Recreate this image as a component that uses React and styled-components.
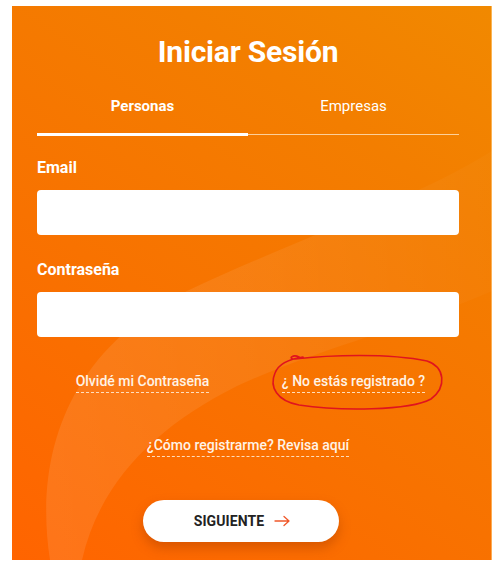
import React from "react";
import styled, { createGlobalStyle } from "styled-components";

const GlobalStyle = createGlobalStyle`
  html, body {
    margin: 0;
    padding: 0;
    background: #ffffff;
  }
  body {
    font-family: Roboto, "Liberation Sans", sans-serif;
  }
  * { box-sizing: border-box; }
`;

const Page = styled.div`
  padding: 6px 8px 7px 12px;
`;

const Panel = styled.div`
  position: relative;
  overflow: hidden;
  width: 480px;
  height: 554px;
  background: linear-gradient(35deg, #ff6400 0%, #f87200 40%, #f37e00 75%, #f18900 100%);
  box-shadow: inset -1px 0 0 rgba(255, 210, 140, 0.6);
  padding: 28px 33px 0 25px;
  display: flex;
  flex-direction: column;
`;

const Waves = styled.svg`
  position: absolute;
  inset: 0;
  pointer-events: none;
`;

const Content = styled.div`
  position: relative;
  display: flex;
  flex-direction: column;
`;

const Title = styled.h1`
  margin: 0;
  text-align: center;
  color: #fff;
  font-size: 30px;
  line-height: 36px;
  font-weight: 700;
  letter-spacing: -0.2px;
`;

const Tabs = styled.div`
  margin-top: 26px;
  display: grid;
  grid-template-columns: 1fr 1fr;
  border-bottom: 1px solid rgba(255, 235, 205, 0.75);
`;

const Tab = styled.div`
  text-align: center;
  color: #fff;
  font-size: 15px;
  line-height: 20px;
  font-weight: ${(p) => (p.$active ? 700 : 400)};
  padding-bottom: 17px;
  border-bottom: 3px solid ${(p) => (p.$active ? "#ffffff" : "transparent")};
  margin-bottom: -2px;
`;

const Label = styled.label`
  display: block;
  color: #fff;
  font-size: 16px;
  line-height: 20px;
  font-weight: 700;
  margin-top: ${(p) => p.$top}px;
`;

const Input = styled.input`
  display: block;
  width: 100%;
  height: 45px;
  margin-top: 12px;
  border: none;
  border-radius: 4px;
  background: #fff;
  outline: none;
  padding: 0 12px;
  font-size: 15px;
`;

const LinkRow = styled.div`
  margin-top: 34px;
  display: grid;
  grid-template-columns: 1fr 1fr;
  justify-items: center;
`;

const LinkCell = styled.div`
  position: relative;
  display: flex;
  justify-content: center;
`;

const TextLink = styled.a`
  color: #fff3e6;
  font-size: 14px;
  line-height: 20px;
  font-weight: 500;
  text-decoration: none;
  padding-bottom: 1px;
  border-bottom: 1px dashed rgba(255, 240, 220, 0.85);
`;

const HowRow = styled.div`
  margin-top: 42px;
  display: flex;
  justify-content: center;
`;

const Scribble = styled.svg`
  position: absolute;
  left: -13px;
  top: -18px;
  width: 176px;
  height: 58px;
  overflow: visible;
  pointer-events: none;
`;

const ButtonRow = styled.div`
  margin-top: 43px;
  display: flex;
  justify-content: center;
  padding-right: 15px;
`;

const NextButton = styled.button`
  width: 196px;
  height: 42px;
  border: none;
  border-radius: 21px;
  background: #fff;
  box-shadow: 0 6px 12px rgba(150, 50, 0, 0.35);
  display: flex;
  align-items: center;
  justify-content: center;
  gap: 10px;
  padding: 0 0 0 4px;
  font-family: Roboto, "Liberation Sans", sans-serif;
  font-size: 14px;
  font-weight: 700;
  color: #222;
  letter-spacing: 0.1px;
  cursor: pointer;
`;

const Arrow = () => (
  <svg width="17" height="12" viewBox="0 0 17 12" fill="none">
    <path d="M1 6h14M10 1.5L15 6l-5 4.5" stroke="#f0582a" strokeWidth="1.3" strokeLinecap="round" strokeLinejoin="round" />
  </svg>
);

export default function App() {
  return (
    <>
      <GlobalStyle />
      <Page>
        <Panel>
          <Waves viewBox="0 0 480 554" preserveAspectRatio="none">
            <defs>
              <linearGradient id="band" x1="0" y1="0" x2="1" y2="0">
                <stop offset="0" stopColor="#fff" stopOpacity="0.1" />
                <stop offset="0.45" stopColor="#fff" stopOpacity="0.07" />
                <stop offset="1" stopColor="#fff" stopOpacity="0.02" />
              </linearGradient>
            </defs>
            <path
              d="M38 554 C 22 450, 55 345, 175 285 C 280 235, 400 195, 480 145 L 480 285 C 400 320, 300 345, 225 380 C 145 420, 88 475, 70 554 Z"
              fill="url(#band)"
            />
          </Waves>
          <Content>
            <Title>Iniciar Sesión</Title>
            <Tabs>
              <Tab $active>Personas</Tab>
              <Tab>Empresas</Tab>
            </Tabs>
            <Label $top={23}>Email</Label>
            <Input type="email" />
            <Label $top={25}>Contraseña</Label>
            <Input type="password" />
            <LinkRow>
              <LinkCell>
                <TextLink href="#">Olvidé mi Contraseña</TextLink>
              </LinkCell>
              <LinkCell>
                <TextLink href="#">¿ No estás registrado ?</TextLink>
                <Scribble viewBox="0 0 176 58">
                  <path
                    d="M30 4 C 24 1, 18 6, 26 6 C 60 2, 120 0, 158 8 C 176 14, 178 34, 162 46 C 140 58, 70 58, 30 52 C 8 48, 0 34, 6 20 C 10 10, 20 6, 34 4"
                    fill="none"
                    stroke="#e0141e"
                    strokeWidth="1.6"
                    strokeLinecap="round"
                  />
                </Scribble>
              </LinkCell>
            </LinkRow>
            <HowRow>
              <TextLink href="#">¿Cómo registrarme? Revisa aquí</TextLink>
            </HowRow>
            <ButtonRow>
              <NextButton>
                SIGUIENTE <Arrow />
              </NextButton>
            </ButtonRow>
          </Content>
        </Panel>
      </Page>
    </>
  );
}
